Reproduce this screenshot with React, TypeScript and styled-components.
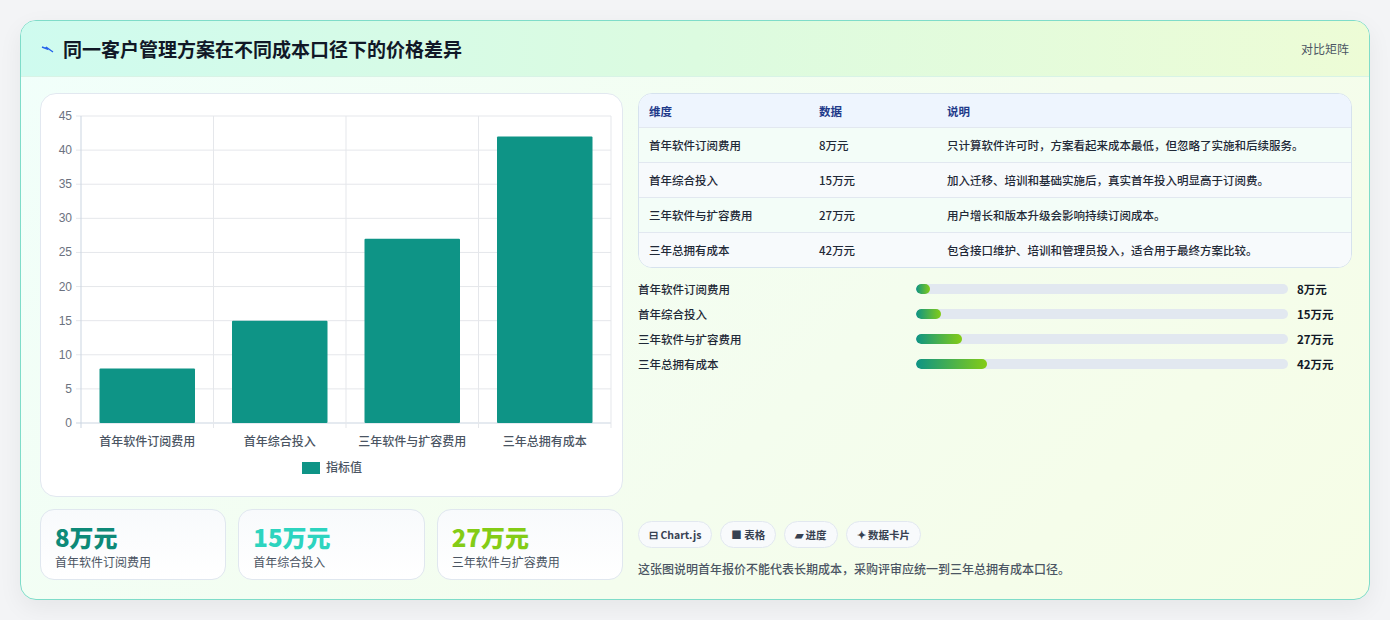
import React from "react";
import styled, { createGlobalStyle } from "styled-components";

const Global = createGlobalStyle`
  html,body{margin:0;padding:0;background:#f3f4f6;}
  body{font-family:"Noto Sans CJK SC","Noto Sans",sans-serif;color:#1f2937;}
`;
const Page = styled.div`padding:20px 20px 20px 20px;width:1350px;`;
const Card = styled.div`
  border:1px solid #7fdcc9;border-radius:16px;overflow:hidden;height:578px;
  background:linear-gradient(135deg,#f1fffb 0%,#f4fdee 60%,#f6fde6 100%);
  box-shadow:0 8px 24px rgba(0,0,0,0.06);display:flex;flex-direction:column;
`;
const Header = styled.div`
  height:55px;display:flex;align-items:center;justify-content:space-between;padding:0 20px 0 20px;
  background:linear-gradient(90deg,#cffbef 0%,#dcfbe0 50%,#edfcd6 100%);border-bottom:1px solid #d8f3e6;
`;
const Title = styled.h1`margin:0;font-size:19px;font-weight:700;color:#111827;display:flex;align-items:center;gap:8px;`;
const Tag = styled.span`font-size:12px;color:#4b5563;`;
const Body = styled.div`flex:1;display:grid;grid-template-columns:583px 714px;gap:15px;padding:16px 19px 18px 19px;`;
const Col = styled.div`display:flex;flex-direction:column;`;
const ChartBox = styled.div`height:402px;background:#fff;border:1px solid #e2e8f0;border-radius:16px;`;
const Stats = styled.div`display:grid;grid-template-columns:repeat(3,1fr);gap:12px;margin-top:12px;`;
const Stat = styled.div`height:71px;border:1px solid #e0e7ef;border-radius:14px;background:linear-gradient(180deg,#f8fafc,#ffffff);padding:12px 14px;box-sizing:border-box;`;
const StatVal = styled.div<{c:string}>`font-size:24px;font-weight:800;color:${p=>p.c};line-height:30px;`;
const StatLbl = styled.div`font-size:12px;color:#4b5563;margin-top:1px;`;
const Table = styled.div`border:1px solid #d6e2ee;border-radius:14px;overflow:hidden;background:#fff;`;
const Row = styled.div<{h?:boolean;alt?:boolean}>`
  display:grid;grid-template-columns:170px 128px 1fr;align-items:center;padding:0 10px;
  height:${p=>p.h?33:34}px;font-size:11.5px;
  background:${p=>p.h?"#eef5fe":p.alt?"#f7fafc":"#f3fdf8"};
  color:${p=>p.h?"#1e3a8a":"#1f2937"};font-weight:${p=>p.h?700:500};
  border-top:${p=>p.h?"none":"1px solid #e2e8f0"};
`;
const Bars = styled.div`display:flex;flex-direction:column;gap:8px;margin-top:12px;`;
const BarRow = styled.div`display:grid;grid-template-columns:269px 372px 1fr;align-items:center;column-gap:9px;height:17px;font-size:11.5px;font-weight:500;`;
const Track = styled.div`height:10px;border-radius:5px;background:#e2e8f0;overflow:hidden;`;
const Fill = styled.div`height:100%;border-radius:5px;background:linear-gradient(90deg,#0e9484,#84cc16);`;
const BarVal = styled.span`font-weight:700;color:#111827;`;
const Chips = styled.div`display:flex;gap:8px;margin-top:auto;`;
const Chip = styled.span`height:27px;padding:0 10px;border:1px solid #e2e8f0;border-radius:14px;background:#f8fafc;display:flex;align-items:center;gap:4px;font-size:10.5px;font-weight:700;color:#374151;box-sizing:border-box;`;
const Note = styled.p`margin:12px 0 4px 0;font-size:12px;color:#4b5563;font-weight:500;`;

const data=[["首年软件订阅费用",8,"只计算软件许可时，方案看起来成本最低，但忽略了实施和后续服务。"],["首年综合投入",15,"加入迁移、培训和基础实施后，真实首年投入明显高于订阅费。"],["三年软件与扩容费用",27,"用户增长和版本升级会影响持续订阅成本。"],["三年总拥有成本",42,"包含接口维护、培训和管理员投入，适合用于最终方案比较。"]] as [string,number,string][];

function Chart(){
  const x0=40,x1=570,y0=329,yT=22,sc=(y0-yT)/45;const cw=(x1-x0)/4;
  return <svg width="581" height="400" style={{display:"block"}}>
    {[0,5,10,15,20,25,30,35,40,45].map(v=>{const y=y0-v*sc;return <g key={v}>
      <line x1={x0-5} x2={x1} y1={y} y2={y} stroke={v===0?"#cbd5e1":"#e5e7eb"}/>
      <text x={x0-9} y={y+4} textAnchor="end" fontSize="12" fill="#6b7280" fontFamily="Liberation Sans">{v}</text></g>})}
    {[0,1,2,3,4].map(i=><line key={i} x1={x0+i*cw} x2={x0+i*cw} y1={yT} y2={y0+5} stroke={i===0?"#cbd5e1":"#e5e7eb"}/>)}
    {data.map(([l,v],i)=><g key={l}>
      <rect x={x0+i*cw+18.5} width={cw-37} y={y0-v*sc} height={v*sc} fill="#0e9486" rx="1"/>
      <text x={x0+i*cw+cw/2} y={y0+23} textAnchor="middle" fontSize="12" fill="#4b5563" fontWeight="500">{l}</text></g>)}
    <rect x="261" y="368" width="18" height="12" fill="#0e9486"/>
    <text x="285" y="378" fontSize="12" fill="#4b5563" fontWeight="500">指标值</text>
  </svg>;
}

export default function App(){
  return <Page><Global/><Card>
    <Header><Title><svg width="14" height="10" viewBox="0 0 14 10"><path d="M1 3 L6 5 L5 3 L12 8" stroke="#2563eb" strokeWidth="1.4" fill="none"/></svg>同一客户管理方案在不同成本口径下的价格差异</Title><Tag>对比矩阵</Tag></Header>
    <Body>
      <Col>
        <ChartBox><Chart/></ChartBox>
        <Stats>
          <Stat><StatVal c="#0e8a78">8万元</StatVal><StatLbl>首年软件订阅费用</StatLbl></Stat>
          <Stat><StatVal c="#2dd4bf">15万元</StatVal><StatLbl>首年综合投入</StatLbl></Stat>
          <Stat><StatVal c="#84cc16">27万元</StatVal><StatLbl>三年软件与扩容费用</StatLbl></Stat>
        </Stats>
      </Col>
      <Col>
        <Table>
          <Row h><span>维度</span><span>数据</span><span>说明</span></Row>
          {data.map(([l,v,d],i)=><Row key={l} alt={i%2===1}><span>{l}</span><span>{v}万元</span><span>{d}</span></Row>)}
        </Table>
        <Bars>{data.map(([l,v])=><BarRow key={l}><span>{l}</span><Track><Fill style={{width:`${Math.max(v/220*100,3.8)}%`}}/></Track><BarVal>{v}万元</BarVal></BarRow>)}</Bars>
        <Chips><Chip>⊟ Chart.js</Chip><Chip>■ 表格</Chip><Chip>▰ 进度</Chip><Chip>✦ 数据卡片</Chip></Chips>
        <Note>这张图说明首年报价不能代表长期成本，采购评审应统一到三年总拥有成本口径。</Note>
      </Col>
    </Body>
  </Card></Page>;
}
